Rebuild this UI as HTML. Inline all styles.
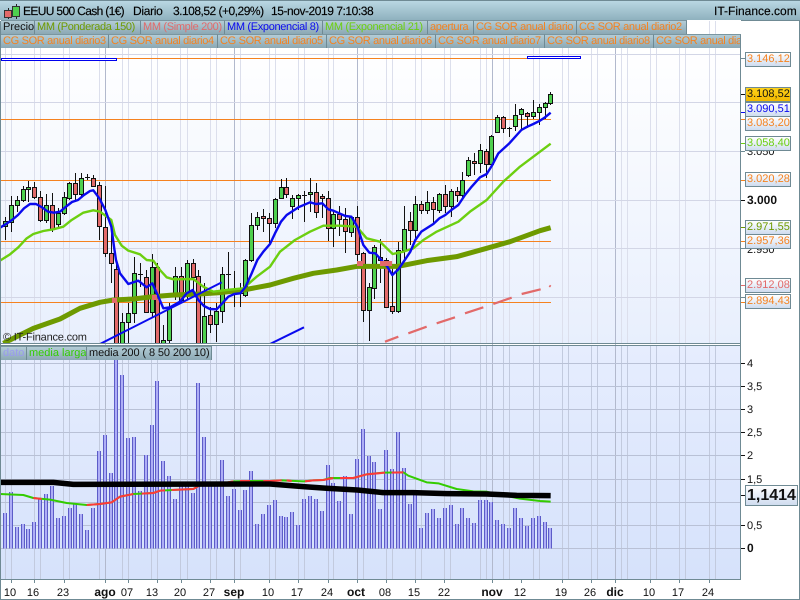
<!DOCTYPE html>
<html><head><meta charset="utf-8"><title>EEUU 500 Cash</title>
<style>
html,body{margin:0;padding:0;width:800px;height:600px;overflow:hidden;background:#fff;font-family:"Liberation Sans",sans-serif;font-size:11px;text-rendering:geometricPrecision}
.a{position:absolute}
#hd{left:0;top:0;width:800px;height:20px;background:linear-gradient(#b9d7e3,#8fb1be);border-top:1px solid #6f8a94;box-sizing:border-box}
.t{position:absolute;top:3px;color:#000;font-size:12px;white-space:pre;-webkit-text-stroke:.15px #000}
.l{position:absolute;box-sizing:border-box;height:14px;line-height:13px;padding-left:2px;background:linear-gradient(#b3ccd6,#8ba8b4);border-right:1px solid #6f8a94;border-top:1px solid #7b96a0;white-space:nowrap;overflow:hidden;font-size:11px;letter-spacing:-.33px}
.o{color:#f5821f}
.g{position:absolute;box-sizing:border-box;left:745px;width:46px;height:15px;line-height:13px;text-align:left;padding-left:1px;border:1px solid #6f8a94;background:linear-gradient(#fff,#cfdcef);font-size:11px}
#g1{left:0;top:48px;width:741px;height:295px;background:linear-gradient(#fff,#e8effd)}
#g2{left:0;top:346px;width:741px;height:233px;background:linear-gradient(#e6edfe,#d6e2fb)}
svg{position:absolute;left:0;top:0}
</style></head><body>
<div class="a" id="g1"></div><div class="a" id="g2"></div>
<svg width="800" height="600" viewBox="0 0 800 600" font-family="Liberation Sans, sans-serif" font-size="11">
<defs><clipPath id="c0"><rect x="0" y="21" width="741" height="322"/></clipPath><clipPath id="c1"><rect x="0" y="48" width="741" height="295"/></clipPath><clipPath id="c2"><rect x="0" y="346" width="741" height="233"/></clipPath>
<path id="gv" fill="none" d="M5.5 21V579M11.5 21V579M34.5 21V579M40.5 21V579M63.5 21V579M69.5 21V579M99.5 21V579M122.5 21V579M128.5 21V579M151.5 21V579M157.5 21V579M180.5 21V579M187.5 21V579M210.5 21V579M216.5 21V579M240.5 21V579M269.5 21V579M275.5 21V579M298.5 21V579M304.5 21V579M328.5 21V579M333.5 21V579M363.5 21V579M386.5 21V579M392.5 21V579M415.5 21V579M421.5 21V579M444.5 21V579M450.5 21V579M480.5 21V579M486.5 21V579M503.5 21V579M509.5 21V579M533.5 21V579M539.5 21V579M562.5 21V579M568.5 21V579M591.5 21V579M597.5 21V579M621.5 21V579M627.5 21V579M650.5 21V579M656.5 21V579M679.5 21V579M685.5 21V579M709.5 21V579M715.5 21V579"/>
<path id="v" d="M5 513V548.5M11 492V548.5M17 527V548.5M23 524V548.5M28 529V548.5M34 522V548.5M40 498V548.5M46 494V548.5M52 486V548.5M58 518V548.5M64 516V548.5M70 508V548.5M75 504V548.5M81 514V548.5M87 530V548.5M93 508V548.5M99 451V548.5M105 435V548.5M111 473V548.5M116 358V548.5M122 375V548.5M128 438V548.5M134 437V548.5M140 491V548.5M146 455V548.5M152 425V548.5M157 381V548.5M163 461V548.5M169 476V548.5M175 499V548.5M181 486V548.5M187 486V548.5M193 493V548.5M198 383V548.5M204 437V548.5M210 486V548.5M216 486V548.5M222 460V548.5M228 496V548.5M234 489V548.5M240 510V548.5M245 490V548.5M251 471V548.5M257 524V548.5M263 514V548.5M269 505V548.5M275 500V548.5M281 516V548.5M286 517V548.5M292 512V548.5M298 525V548.5M304 499V548.5M310 496V548.5M316 499V548.5M322 511V548.5M328 465V548.5M333 483V548.5M339 501V548.5M345 476V548.5M351 514V548.5M357 459V548.5M363 429V548.5M369 456V548.5M374 462V548.5M380 509V548.5M386 450V548.5M392 469V548.5M398 432V548.5M404 468V548.5M410 504V548.5M415 495V548.5M421 528V548.5M427 513V548.5M433 509V548.5M439 518V548.5M445 508V548.5M451 505V548.5M457 524V548.5M462 508V548.5M468 518V548.5M474 523V548.5M480 500V548.5M486 500V548.5M491 502V548.5M497 520V548.5M503 524V548.5M509 528V548.5M515 508V548.5M521 518V548.5M527 526V548.5M533 518V548.5M539 516V548.5M545 522V548.5M550 528V548.5"/></defs>

<!-- grid -->
<use href="#gv" stroke="#dcdfec" clip-path="url(#c0)"/>
<use href="#gv" stroke="#c2cade" clip-path="url(#c2)"/>
<path stroke="#b2b9cd" stroke-width="1" fill="none" d="M105.5 21V579M234.5 21V579M357.5 21V579M492.5 21V579M615.5 21V579"/>
<path stroke="#d3d6e6" stroke-width="1" fill="none" d="M1 54.5H741M1 102.5H741M1 151.5H741M1 200.5H741M1 248.5H741M1 297.5H741"/>
<path stroke="#b9c1d6" stroke-width="1" fill="none" d="M1 363.5H741M1 386.5H741M1 409.5H741M1 432.5H741M1 455.5H741M1 479.5H741M1 502.5H741M1 525.5H741M1 548.5H741"/>

<g clip-path="url(#c1)">
<!-- orange levels -->
<path stroke="#f5821f" stroke-width="1" fill="none" d="M1 58.5H580M1 119.5H551M1 180.5H551M1 241.5H551M1 302.5H551"/>
<path stroke="#0000ee" fill="#fff" d="M1.5 58.5H116.5V60.5H1.5zM527.5 56.5H580.5V58.5H527.5z"/>
<!-- candles -->
<path stroke="#111" stroke-width="1" fill="none" d="M5.5 217V240M11.5 196V232M17.5 196V212M23.5 186V202M28.5 181V202M34.5 182V199M40.5 191V222M46.5 194V223M52.5 193V232M58.5 208V227M64.5 192V215M69.5 182V200M75.5 173V202M81.5 173V196M87.5 174V180M85 177.5h5M93.5 175V186M99.5 182V240M105.5 186V257M111.5 220V283M116.5 263V345M122.5 313V345M128.5 303V345M134.5 257V323M140.5 263V287M138 274.5h5M146.5 270V313M152.5 254V317M157.5 263V345M163.5 325V345M169.5 303V345M175.5 267V300M181.5 267V303M187.5 260V300M193.5 259V293M198.5 270V345M204.5 283V345M210.5 307V333M216.5 303V342M222.5 267V323M228.5 252V290M226 274.5h5M234.5 271V307M232 293.5h5M240.5 283V307M238 293.5h5M245.5 259V297M251.5 213V262M257.5 212V230M263.5 209V232M269.5 213V243M275.5 198V228M281.5 179V199M286.5 178V198M292.5 195V219M298.5 194V210M304.5 191V222M302 195.5h5M310.5 178V212M316.5 183V218M322.5 194V218M328.5 191V241M333.5 210V247M339.5 206V236M345.5 208V253M351.5 217V237M357.5 206V262M363.5 252V322M369.5 283V341M374.5 245V299M380.5 239V283M386.5 258V307M392.5 267V314M398.5 242V313M404.5 206V262M410.5 212V245M415.5 196V240M421.5 201V214M427.5 191V214M433.5 197V223M439.5 193V213M445.5 185V213M451.5 189V217M457.5 187V202M462.5 172V200M468.5 157V177M474.5 153V175M480.5 144V173M486.5 149V178M491.5 135V167M497.5 115V133M503.5 116V133M509.5 127V137M507 128.5h5M515.5 104V131M521.5 108V129M527.5 112V128M533.5 100V119M539.5 104V125M545.5 102V119M550.5 92V105"/>
<path fill="#4ed04e" stroke="#111" stroke-width="1" d="M3.5 221.5h4V226.5h-4zM9.5 205.5h4V222.5h-4zM15.5 200.5h4V205.5h-4zM21.5 189.5h4V200.5h-4zM26.5 187.5h4V189.5h-4zM44.5 205.5h4V220.5h-4zM56.5 213.5h4V224.5h-4zM62.5 197.5h4V213.5h-4zM67.5 183.5h4V198.5h-4zM79.5 178.5h4V194.5h-4zM120.5 322.5h4V350h-4zM126.5 313.5h4V322.5h-4zM132.5 273.5h4V313.5h-4zM150.5 267.5h4V312.5h-4zM161.5 340.5h4V350h-4zM167.5 307.5h4V340.5h-4zM173.5 276.5h4V293.5h-4zM185.5 263.5h4V293.5h-4zM202.5 316.5h4V350h-4zM214.5 311.5h4V324.5h-4zM220.5 274.5h4V311.5h-4zM243.5 260.5h4V295.5h-4zM249.5 225.5h4V260.5h-4zM255.5 217.5h4V225.5h-4zM273.5 199.5h4V223.5h-4zM279.5 187.5h4V198.5h-4zM290.5 198.5h4V206.5h-4zM296.5 195.5h4V198.5h-4zM308.5 192.5h4V194.5h-4zM331.5 214.5h4V228.5h-4zM349.5 217.5h4V232.5h-4zM367.5 287.5h4V310.5h-4zM372.5 247.5h4V288.5h-4zM396.5 250.5h4V311.5h-4zM402.5 229.5h4V250.5h-4zM413.5 204.5h4V230.5h-4zM425.5 202.5h4V210.5h-4zM437.5 194.5h4V210.5h-4zM449.5 191.5h4V206.5h-4zM460.5 180.5h4V195.5h-4zM466.5 160.5h4V175.5h-4zM478.5 150.5h4V163.5h-4zM489.5 136.5h4V164.5h-4zM495.5 117.5h4V132.5h-4zM513.5 115.5h4V126.5h-4zM519.5 109.5h4V114.5h-4zM531.5 112.5h4V116.5h-4zM537.5 107.5h4V112.5h-4zM543.5 103.5h4V107.5h-4zM548.5 94.5h4V103.5h-4z"/>
<path fill="#e26a6a" stroke="#111" stroke-width="1" d="M32.5 187.5h4V197.5h-4zM38.5 197.5h4V220.5h-4zM50.5 205.5h4V229.5h-4zM73.5 183.5h4V194.5h-4zM91.5 178.5h4V186.5h-4zM97.5 185.5h4V226.5h-4zM103.5 227.5h4V253.5h-4zM109.5 253.5h4V263.5h-4zM114.5 269.5h4V350h-4zM144.5 277.5h4V312.5h-4zM155.5 267.5h4V350h-4zM179.5 276.5h4V300.5h-4zM191.5 263.5h4V277.5h-4zM196.5 276.5h4V350h-4zM208.5 315.5h4V324.5h-4zM261.5 216.5h4V218.5h-4zM267.5 218.5h4V223.5h-4zM284.5 187.5h4V194.5h-4zM314.5 192.5h4V212.5h-4zM320.5 196.5h4V198.5h-4zM326.5 198.5h4V228.5h-4zM337.5 214.5h4V219.5h-4zM343.5 219.5h4V231.5h-4zM355.5 217.5h4V254.5h-4zM361.5 253.5h4V310.5h-4zM378.5 257.5h4V260.5h-4zM384.5 260.5h4V307.5h-4zM390.5 306.5h4V311.5h-4zM408.5 221.5h4V230.5h-4zM419.5 204.5h4V210.5h-4zM431.5 202.5h4V209.5h-4zM443.5 194.5h4V206.5h-4zM455.5 191.5h4V195.5h-4zM472.5 161.5h4V163.5h-4zM484.5 151.5h4V164.5h-4zM501.5 117.5h4V128.5h-4zM525.5 113.5h4V116.5h-4z"/>
<!-- MAs : coordinates in 3x crop space -->
<g fill="none" stroke-linejoin="round" stroke-linecap="butt">
<g transform="translate(0,70) scale(.33333)">
<polyline vector-effect="non-scaling-stroke" stroke="#6e9a00" stroke-width="5" points="10,820 50,800 100,775 180,747 240,715 300,697 340,690 400,687 460,680 520,675 600,672 660,668 730,660 810,645 880,625 940,610 1010,600 1072,589 1140,589 1195,589 1280,572 1370,560 1460,535 1530,515 1620,482 1652,473"/>
<polyline vector-effect="non-scaling-stroke" stroke="#6ccf10" stroke-width="2.4" points="0,572 30,553 55,532 80,505 100,492 130,483 160,478 190,470 215,450 250,428 280,421 300,425 334,450 345,495 365,527 385,542 420,553 440,570 460,572 480,600 500,622 520,628 580,627 610,650 640,665 680,660 730,655 770,620 810,590 840,545 885,510 930,485 970,467 1020,467 1070,470 1100,505 1140,515 1178,552 1210,545 1240,535 1270,510 1310,485 1375,455 1410,425 1460,390 1510,335 1560,290 1620,245 1652,221"/>
<polyline vector-effect="non-scaling-stroke" stroke="#0a0aee" stroke-width="2.4" points="0,473 18,462 36,450 54,435 72,415 90,402 108,402 126,412 144,425 162,428 180,425 198,410 216,396 234,390 252,375 270,363 280,361 298,385 316,420 334,470 342,530 348,570 360,610 385,642 415,632 440,652 457,640 475,680 490,715 510,712 540,695 560,670 578,660 595,690 612,708 630,717 650,718 667,700 685,680 703,672 721,670 737,650 755,610 772,570 790,545 810,522 825,490 843,455 860,435 895,412 930,397 948,402 967,400 985,418 1000,422 1018,430 1036,438 1054,440 1072,470 1090,525 1108,548 1126,550 1144,570 1162,590 1177,615 1195,598 1213,572 1231,545 1246,510 1264,485 1300,462 1318,445 1336,435 1354,420 1375,405 1395,375 1415,350 1440,322 1460,312 1477,285 1495,250 1528,220 1564,180 1582,170 1600,162 1620,152 1635,142 1652,128"/>
<path vector-effect="non-scaling-stroke" stroke="#0a0aee" stroke-width="2" d="M300,822L665,637M810,822L912,772"/>
<path vector-effect="non-scaling-stroke" stroke="#e26a6a" stroke-width="2.2" d="M1155,815L1195,800M1225,790L1280,770M1310,760L1365,742M1395,730L1450,712M1480,702L1535,683M1565,672L1622,658M1648,647L1652,650"/>
</g></g>
<path fill="#e26a6a" d="M112 298h5v5h-5zM152 295h5v5h-5zM357 261h6v5h-6zM380 261h12v5h-12z"/>
<text x="3" y="340.5" font-size="11" letter-spacing="-.2" fill="#222">© IT-Finance.com</text>
</g>

<g clip-path="url(#c2)">
<use href="#v" stroke="#5c5cc8" stroke-width="4" fill="none"/>
<use href="#v" stroke="#aeaef6" stroke-width="2" fill="none"/>
<g fill="none" transform="translate(0,340) scale(.33333)" stroke-linejoin="round">
<polyline vector-effect="non-scaling-stroke" stroke="#33cc00" stroke-width="2" points="0,462 70,465 100,474 150,479 200,489 260,495 300,492 335,487 360,470 400,462 460,459 480,452 540,449 580,447 610,430 640,433 680,428 700,424 750,423 810,423 845,421 910,424 940,421 970,420 990,414 1060,414 1100,403 1150,398 1210,397 1225,407 1280,427 1315,430 1370,447 1420,454 1460,455 1510,466 1560,476 1620,483 1652,485"/>
<path vector-effect="non-scaling-stroke" stroke="#ff3838" stroke-width="2" d="M100,474L125,477M260,495L300,492 335,487 360,470 400,462M425,461L460,459 480,452 495,451M515,450L540,449 580,447 610,430M680,428L700,424M720,423L750,423M790,423L810,423 845,421M860,421L875,423M915,424L940,421 970,420 1000,414M1020,414L1060,414 1100,403 1155,398M1175,398L1210,397"/>
<polyline vector-effect="non-scaling-stroke" stroke="#000" stroke-width="5.5" points="0,427 160,427 220,433 810,432 910,440 985,445 1072,450 1150,458 1240,458 1340,461 1460,462 1550,466 1652,467"/>
</g></g>

<!-- frames -->
<path stroke="#6f8a94" stroke-width="1" fill="none" d="M.5 21V599M740.5 48V580M0 343.5H741M0 345.5H741M0 579.5H741M0 599.5H800M799.5 0V600M741 20.5H800"/>
<path stroke="#6f8a94" stroke-width="1" fill="none" d="M11.5 580V583M34.5 580V583M64.5 580V583M105.5 580V583M128.5 580V583M157.5 580V583M181.5 580V583M210.5 580V583M234.5 580V583M269.5 580V583M298.5 580V583M328.5 580V583M357.5 580V583M386.5 580V583M415.5 580V583M444.5 580V583M492.5 580V583M521.5 580V583M562.5 580V583M591.5 580V583M615.5 580V583M650.5 580V583M679.5 580V583M709.5 580V583"/>
<path stroke="#6f8a94" fill="none" d="M741 58.5h4M741 151.5h4M741 248.5h4M741 297.5h4"/>
<path stroke="#111" fill="none" d="M741 94.5h4M741 200.5h4M741 363.5h4M741 386.5h4M741 409.5h4M741 432.5h4M741 455.5h4M741 479.5h4M741 495.5h4M741 525.5h4M741 548.5h4"/>
<path stroke="#0a0aee" fill="none" d="M741 112.5h4"/><path stroke="#f5821f" fill="none" d="M741 119.5h4M741 180.5h4M741 241.5h4M741 302.5h4"/><path stroke="#6ccf10" fill="none" d="M741 143.5h4"/><path stroke="#6e9a00" fill="none" d="M741 227.5h4"/><path stroke="#e26a6a" fill="none" d="M741 285.5h4"/>

<!-- axis text -->
<g fill="#111">
<text x="747" y="155">3.050</text><text x="747" y="253">2.950</text><text x="747" y="302">2.900</text>
<text x="747" y="204" font-weight="bold" font-size="12">3.000</text>
<text x="747" y="367">4</text><text x="747" y="390">3,5</text><text x="747" y="413">3</text><text x="747" y="436">2,5</text><text x="747" y="459">2</text><text x="747" y="483">1,5</text><text x="747" y="529">0,5</text><text x="747" y="552" font-weight="bold" font-size="12">0</text>
</g>
<g fill="#111" text-anchor="middle">
<text x="10" y="596">10</text><text x="33" y="596">16</text><text x="63" y="596">23</text><text x="105" y="596" font-weight="bold" font-size="12">ago</text><text x="127" y="596">07</text><text x="152" y="596">13</text><text x="180" y="596">20</text><text x="209" y="596">27</text><text x="234" y="596" font-weight="bold" font-size="12">sep</text><text x="268" y="596">10</text><text x="297" y="596">17</text><text x="327" y="596">24</text><text x="356" y="596" font-weight="bold" font-size="12">oct</text><text x="385" y="596">08</text><text x="414" y="596">15</text><text x="444" y="596">22</text><text x="492" y="596" font-weight="bold" font-size="12">nov</text><text x="520" y="596">12</text><text x="561" y="596">19</text><text x="590" y="596">26</text><text x="615" y="596" font-weight="bold" font-size="12">dic</text><text x="649" y="596">10</text><text x="678" y="596">17</text><text x="708" y="596">24</text>
</g>
</svg>

<!-- header -->
<div class="a" id="hd">
<svg width="20" height="20" style="left:2px;top:1px"><path stroke="#222" fill="none" d="M6.5 6V17M14.5 2V17"/><rect x="2.5" y="8.5" width="7" height="7" fill="#e26a6a" stroke="#333"/><rect x="10.5" y="4.5" width="7" height="10" fill="#4ed04e" stroke="#333"/></svg>
<span class="t" style="left:23px;letter-spacing:-.65px">EEUU 500 Cash (1€)</span>
<span class="t" style="left:133px;letter-spacing:-.3px">Diario</span>
<span class="t" style="left:173px;letter-spacing:-.5px">3.108,52 (+0,29%)</span>
<span class="t" style="left:271px;letter-spacing:-.45px">15-nov-2019 7:10:38</span>
<span class="t" style="left:714px">IT-Finance.com</span>
</div>

<!-- legends -->
<div class="l" style="left:1px;top:20px;width:34px;color:#111;letter-spacing:0">Precio</div>
<div class="l" style="left:35px;top:20px;width:106px;color:#6e9a00">MM (Ponderada 150)</div>
<div class="l" style="left:141px;top:20px;width:84px;color:#e26a6a">MM (Simple 200)</div>
<div class="l" style="left:225px;top:20px;width:98px;color:#0a0aee">MM (Exponencial 8)</div>
<div class="l" style="left:323px;top:20px;width:105px;color:#6ccf10">MM (Exponencial 21)</div>
<div class="l o" style="left:428px;top:20px;width:46px">apertura</div>
<div class="l o" style="left:474px;top:20px;width:103px">CG SOR anual diario</div>
<div class="l o" style="left:577px;top:20px;width:110px">CG SOR anual diario2</div>
<div class="l o" style="left:1px;top:34px;width:108px">CG SOR anual diario3</div>
<div class="l o" style="left:109px;top:34px;width:109px">CG SOR anual diario4</div>
<div class="l o" style="left:218px;top:34px;width:109px">CG SOR anual diario5</div>
<div class="l o" style="left:327px;top:34px;width:109px">CG SOR anual diario6</div>
<div class="l o" style="left:436px;top:34px;width:109px">CG SOR anual diario7</div>
<div class="l o" style="left:545px;top:34px;width:109px">CG SOR anual diario8</div>
<div class="l o" style="left:654px;top:34px;width:87px">CG SOR anual diario9</div>
<div class="l" style="left:1px;top:346px;width:26px;color:#9a9af0;letter-spacing:0">dato</div>
<div class="l" style="left:27px;top:346px;width:60px;color:#33cc00;letter-spacing:0">media larga</div>
<div class="l" style="left:87px;top:346px;width:125px;color:#111;letter-spacing:-.1px">media 200 ( 8 50 200 10)</div>

<!-- price tags -->
<div class="g" style="top:52px;color:#f5821f">3.146,12</div>
<div class="g" style="top:102px;color:#0a0aee">3.090,51</div>
<div class="g" style="top:116px;color:#f5821f">3.083,20</div>
<div class="g" style="top:87px;background:linear-gradient(#ffd21a,#f2b800);color:#111">3.108,52</div>
<div class="g" style="top:136px;color:#6ccf10">3.058,40</div>
<div class="g" style="top:172px;color:#f5821f">3.020,28</div>
<div class="g" style="top:220px;color:#6e9a00">2.971,55</div>
<div class="g" style="top:234px;color:#f5821f">2.957,36</div>
<div class="g" style="top:278px;color:#e26a6a">2.912,08</div>
<div class="g" style="top:294px;color:#f5821f">2.894,43</div>
<div class="g" style="left:745px;top:485px;width:53px;height:21px;line-height:19px;font-size:16px;font-weight:bold;color:#111">1,1414</div>
</body></html>
